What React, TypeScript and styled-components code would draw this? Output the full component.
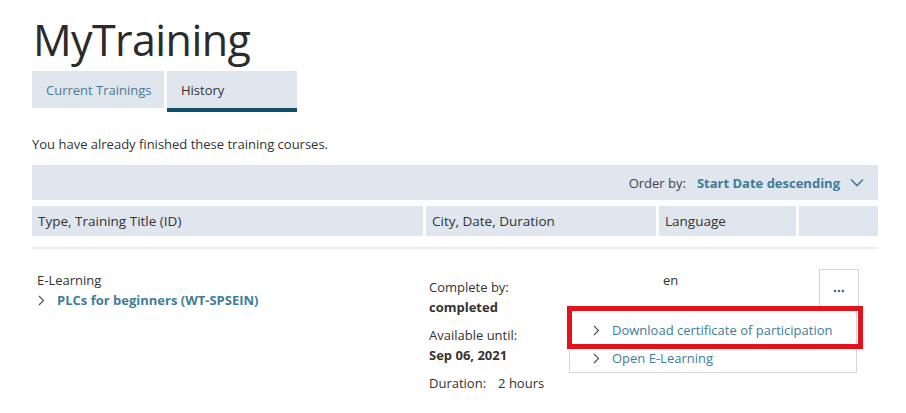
import React from "react";
import styled, { createGlobalStyle } from "styled-components";

const Global = createGlobalStyle`
  html, body { margin: 0; padding: 0; background: #fff; }
  body { font-family: "Open Sans", "Noto Sans", sans-serif; color: #333; font-size: 13px; }
  * { box-sizing: border-box; }
`;

const Page = styled.div`
  padding: 9px 28px 0 32px;
  width: 906px;
`;

const Title = styled.h1`
  margin: 0 0 0 1px;
  font-size: 43px;
  font-weight: 400;
  letter-spacing: -0.6px;
  line-height: 62px;
  color: #2b2b2b;
`;

const Tabs = styled.div`
  display: flex;
  gap: 3px;
`;

const Tab = styled.div<{ $active?: boolean; $w: number }>`
  width: ${(p) => p.$w}px;
  height: 41px;
  display: flex;
  align-items: center;
  padding: 1px 0 0 14px;
  white-space: nowrap;
  background: #dfe6ed;
  border-bottom: 4px solid ${(p) => (p.$active ? "#0f4f67" : "#fff")};
  color: ${(p) => (p.$active ? "#333" : "#4d7a96")};
  font-size: 13px;
`;

const Intro = styled.p`
  margin: 23px 0 0;
  font-size: 13px;
  line-height: 18px;
`;

const Table = styled.div`
  margin-top: 12px;
  width: 846px;
`;

const OrderBar = styled.div`
  height: 35px;
  background: #dfe6ed;
  display: flex;
  justify-content: flex-end;
  align-items: center;
  padding-right: 14px;
  font-size: 13px;
  color: #444;
`;

const OrderValue = styled.span`
  color: #3e7d99;
  font-weight: 700;
  margin-left: 11px;
`;

const Chevron = styled.svg`
  margin-left: 10px;
  display: block;
`;

const Grid = styled.div`
  display: grid;
  grid-template-columns: 391px 230px 137px 1fr;
  column-gap: 3px;
`;

const HeaderRow = styled(Grid)`
  margin-top: 6px;
`;

const HeadCell = styled.div`
  height: 30px;
  background: #dfe6ed;
  display: flex;
  align-items: center;
  padding-left: 6px;
  font-size: 13.5px;
  color: #333;
`;

const Divider = styled.div`
  margin-top: 11px;
  height: 2px;
  background: #e6ecf1;
`;

const BodyRow = styled(Grid)`
  margin-top: 21px;
  line-height: 20px;
`;

const Cell = styled.div<{ $pt?: number; $pl?: number }>`
  padding-top: ${(p) => p.$pt ?? 0}px;
  padding-left: ${(p) => p.$pl ?? 5}px;
`;

const LinkLine = styled.div`
  display: flex;
  align-items: center;
  color: #3e7d99;
  font-weight: 700;
`;

const Arrow = styled.svg`
  display: block;
  margin: 0 12px 0 1px;
  flex: none;
`;

const Group = styled.div`
  & + & {
    margin-top: 8px;
  }
`;

const Strong = styled.div`
  font-weight: 700;
`;

const Gap = styled.span`
  display: inline-block;
  width: 12px;
`;

const ActionCell = styled.div`
  position: relative;
  display: flex;
  justify-content: center;
  margin-top: -1px;
`;

const MoreButton = styled.div`
  width: 40px;
  height: 38px;
  border: 1px solid #d6d6d6;
  border-bottom: none;
  display: flex;
  align-items: center;
  justify-content: center;
  padding-top: 4px;
  background: #fff;
`;

const Menu = styled.div`
  position: absolute;
  top: 37px;
  right: 21px;
  width: 288px;
  border: 1px solid #d6d6d6;
  background: #fff;
  padding-top: 9px;
`;

const MenuItem = styled.div`
  height: 28px;
  display: flex;
  align-items: center;
  padding-left: 22px;
  color: #3e7d99;
  font-size: 13px;
`;

const Highlight = styled.div`
  position: absolute;
  left: -3px;
  top: -1px;
  width: 296px;
  height: 43px;
  border: 5px solid #e3121d;
  pointer-events: none;
`;

const ChevronRight = () => (
  <Arrow width="7" height="11" viewBox="0 0 7 11">
    <path d="M1 1l4.5 4.5L1 10" fill="none" stroke="#555" strokeWidth="1.2" />
  </Arrow>
);

export default function App() {
  return (
    <>
      <Global />
      <Page>
        <Title>MyTraining</Title>
        <Tabs>
          <Tab $w={132}>Current Trainings</Tab>
          <Tab $w={130} $active>History</Tab>
        </Tabs>
        <Intro>You have already finished these training courses.</Intro>
        <Table>
          <OrderBar>
            Order by:
            <OrderValue>Start Date descending</OrderValue>
            <Chevron width="14" height="9" viewBox="0 0 14 9">
              <path d="M1 1.5l6 6 6-6" fill="none" stroke="#3e7d99" strokeWidth="1.6" />
            </Chevron>
          </OrderBar>
          <HeaderRow>
            <HeadCell>Type, Training Title (ID)</HeadCell>
            <HeadCell>City, Date, Duration</HeadCell>
            <HeadCell>Language</HeadCell>
            <HeadCell />
          </HeaderRow>
          <Divider />
          <BodyRow>
            <Cell>
              <div>E-Learning</div>
              <LinkLine>
                <ChevronRight />
                PLCs for beginners (WT-SPSEIN)
              </LinkLine>
            </Cell>
            <Cell $pt={7} $pl={3}>
              <Group>
                <div>Complete by:</div>
                <Strong>completed</Strong>
              </Group>
              <Group>
                <div>Available until:</div>
                <Strong>Sep 06, 2021</Strong>
              </Group>
              <Group>
                <div>
                  Duration:<Gap />2 hours
                </div>
              </Group>
            </Cell>
            <Cell $pl={4}>en</Cell>
            <ActionCell>
              <MoreButton>
                <svg width="12" height="4" viewBox="0 0 12 4">
                  <circle cx="2" cy="2" r="1.3" fill="#3e6f88" />
                  <circle cx="6" cy="2" r="1.3" fill="#3e6f88" />
                  <circle cx="10" cy="2" r="1.3" fill="#3e6f88" />
                </svg>
              </MoreButton>
              <Menu>
                <MenuItem>
                  <ChevronRight />
                  Download certificate of participation
                </MenuItem>
                <MenuItem>
                  <ChevronRight />
                  Open E-Learning
                </MenuItem>
                <Highlight />
              </Menu>
            </ActionCell>
          </BodyRow>
        </Table>
      </Page>
    </>
  );
}
